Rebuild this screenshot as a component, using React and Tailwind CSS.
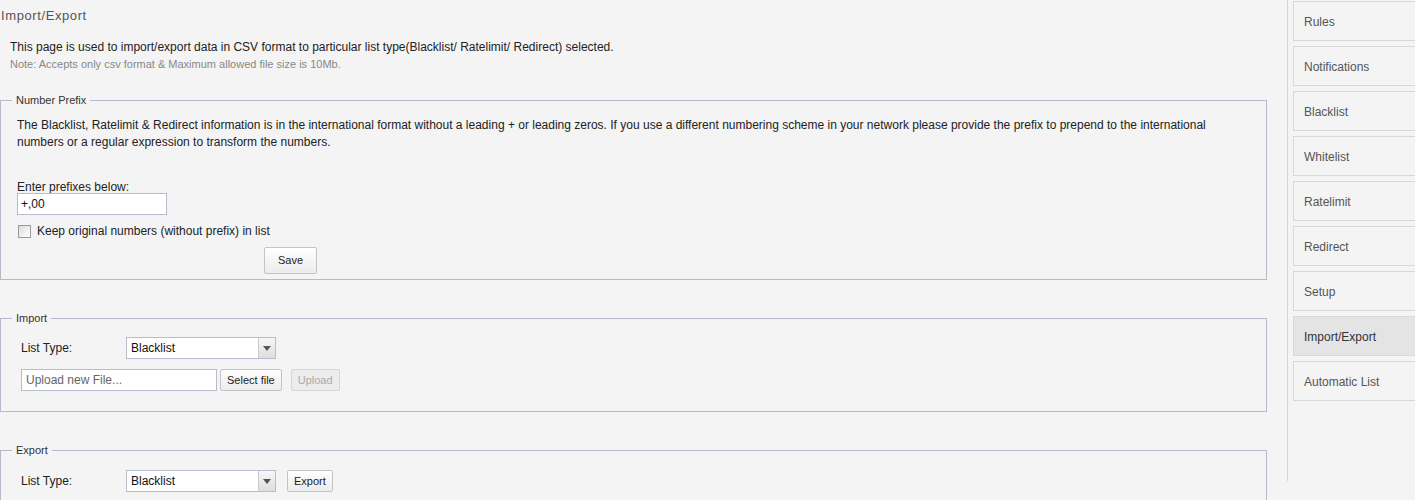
import { useState } from "react";

const menu = [
  "Rules",
  "Notifications",
  "Blacklist",
  "Whitelist",
  "Ratelimit",
  "Redirect",
  "Setup",
  "Import/Export",
  "Automatic List",
];

const Arrow = () => (
  <span className="flex h-full w-[17px] items-center justify-center border-l border-[#c9c9c9] bg-gradient-to-b from-[#f7f7f7] to-[#dedede]">
    <svg width="8" height="5" viewBox="0 0 8 5">
      <path d="M0 0h8L4 5z" fill="#555" />
    </svg>
  </span>
);

const ListSelect = () => (
  <div className="flex h-[22px] w-[150px] items-center border border-[#b9bccb] bg-white">
    <span className="flex-1 pl-[4px] text-[12px] text-[#111]">Blacklist</span>
    <Arrow />
  </div>
);

const Btn = ({ children, disabled, className = "" }) => (
  <button
    className={`h-[22px] rounded-[2px] border px-[6px] text-[11px] ${
      disabled
        ? "border-[#d6d6d6] bg-[#ececec] text-[#aaa]"
        : "border-[#c4c4c4] bg-gradient-to-b from-white to-[#ececec] text-[#222]"
    } ${className}`}
  >
    {children}
  </button>
);

const Legend = ({ children }) => (
  <legend className="ml-[11px] px-[4px] text-[11px] leading-[16px] text-[#333]">
    {children}
  </legend>
);

export default function App() {
  const [keep, setKeep] = useState(false);

  return (
    <div className="flex min-h-[500px] bg-[#f4f4f4] font-['Liberation_Sans',Arial,sans-serif] text-[12px] text-[#222]">
      {/* main */}
      <div className="w-[1267px] shrink-0">
        <div className="pl-[1px] pt-[6px] text-[13px] tracking-[0.6px] text-[#555]">Import/Export</div>
        <p className="mt-[12px] pl-[10px]">
          This page is used to import/export data in CSV format to particular list type(Blacklist/ Ratelimit/ Redirect) selected.
        </p>
        <p className="pl-[10px] text-[11px] text-[#888]">
          Note: Accepts only csv format &amp; Maximum allowed file size is 10Mb.
        </p>

        {/* Number Prefix */}
        <fieldset className="mt-[20px] border border-[#b6b9cc] pb-[5px]">
          <Legend>Number Prefix</Legend>
          <div className="pl-[16px]">
            <p className="mt-[9px] max-w-[1215px] leading-[17px]">
              The Blacklist, Ratelimit &amp; Redirect information is in the international format without a leading + or leading zeros. If you use a different numbering scheme in your network please provide the prefix to prepend to the international numbers or a regular expression to transform the numbers.
            </p>
            <div className="mt-[30px] leading-[12px]">Enter prefixes below:</div>
            <input
              defaultValue="+,00"
              className="h-[22px] w-[150px] border border-[#b9bccb] bg-white px-[3px] text-[12px] text-[#111] outline-none"
            />
            <label className="mt-[7px] flex items-center gap-[6px] pl-[1px]">
              <input
                type="checkbox"
                checked={keep}
                onChange={() => setKeep(!keep)}
                className="m-0 h-[13px] w-[13px] appearance-none border border-[#9a9a9a] bg-gradient-to-br from-[#dcdcdc] to-white"
              />
              Keep original numbers (without prefix) in list
            </label>
            <div className="mt-[7px] pl-[247px]">
              <Btn className="h-[27px] w-[53px]">Save</Btn>
            </div>
          </div>
        </fieldset>

        {/* Import */}
        <fieldset className="mt-[30px] border border-[#b6b9cc] pb-[20px]">
          <Legend>Import</Legend>
          <div className="pl-[20px]">
            <div className="mt-[11px] flex items-center">
              <span className="w-[105px]">List Type:</span>
              <ListSelect />
            </div>
            <div className="mt-[10px] flex items-center">
              <input
                placeholder="Upload new File..."
                className="h-[22px] w-[196px] border border-[#b9bccb] bg-white px-[4px] text-[12px] placeholder:text-[#666] outline-none"
              />
              <Btn className="ml-[3px]">Select file</Btn>
              <Btn disabled className="ml-[9px] px-[4px]">Upload</Btn>
            </div>
          </div>
        </fieldset>

        {/* Export */}
        <fieldset className="mt-[30px] border border-[#b6b9cc] pb-[20px]">
          <Legend>Export</Legend>
          <div className="mt-[12px] flex items-center pl-[20px]">
            <span className="w-[105px]">List Type:</span>
            <ListSelect />
            <Btn className="ml-[11px]">Export</Btn>
          </div>
        </fieldset>
      </div>

      {/* side menu */}
      <div className="ml-[20px] h-[481px] border-l border-[#d6d6d6]" />
      <nav className="ml-[5px] flex flex-1 flex-col gap-[5px] pt-[1px]">
        {menu.map((m) => (
          <div
            key={m}
            className={`flex h-[40px] items-center border border-r-0 border-[#d8d8d8] pl-[10px] pt-[2px] text-[12px] ${
              m === "Import/Export" ? "bg-[#e4e4e4] text-[#333]" : "text-[#555]"
            }`}
          >
            {m}
          </div>
        ))}
      </nav>
    </div>
  );
}
